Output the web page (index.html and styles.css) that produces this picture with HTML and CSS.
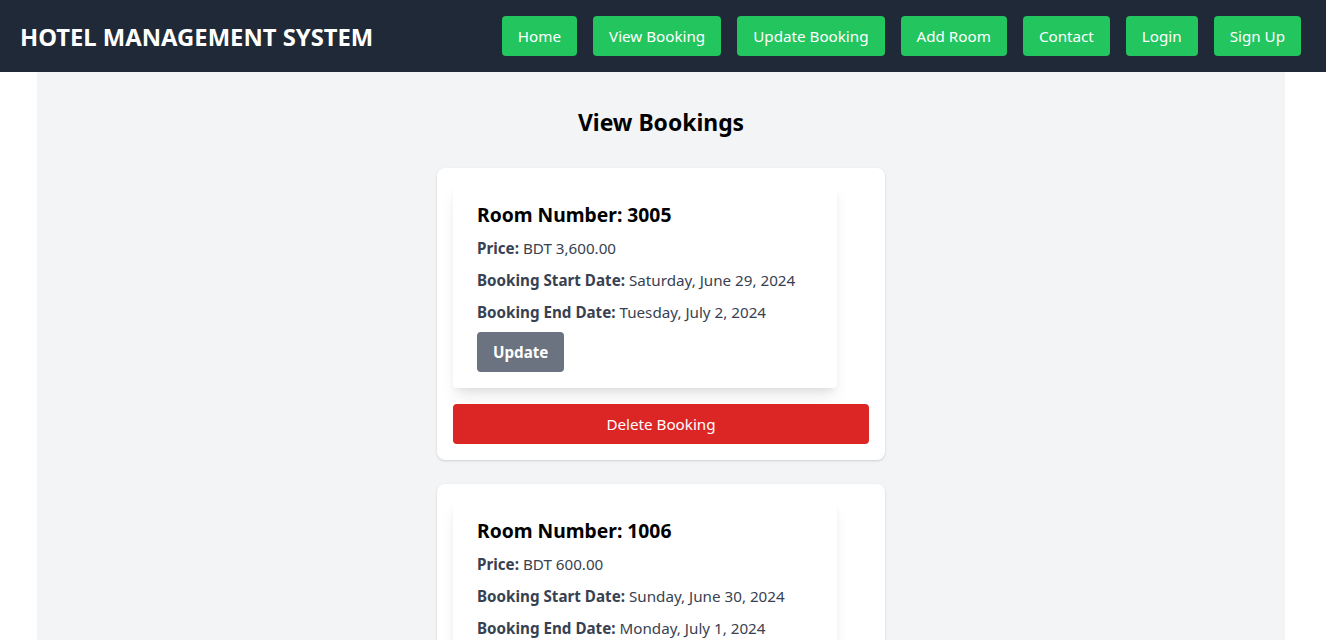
FILE: index.html
```html
<!DOCTYPE html>
<html lang="en">
<head>
<meta charset="utf-8">
<title>Hotel Management System</title>
<link rel="stylesheet" href="styles.css">
</head>
<body>
<header class="navbar">
  <h1 class="brand">HOTEL MANAGEMENT SYSTEM</h1>
  <nav class="nav-links">
    <a class="nav-btn" href="#">Home</a>
    <a class="nav-btn" href="#">View Booking</a>
    <a class="nav-btn" href="#">Update Booking</a>
    <a class="nav-btn" href="#">Add Room</a>
    <a class="nav-btn" href="#">Contact</a>
    <a class="nav-btn" href="#">Login</a>
    <a class="nav-btn" href="#">Sign Up</a>
  </nav>
</header>
<main class="page">
  <h2 class="page-title">View Bookings</h2>
  <div class="booking-list">
    <section class="booking-card">
      <div class="room-card">
        <h3 class="room-title">Room Number: 3005</h3>
        <p class="row"><b>Price:</b> BDT 3,600.00</p>
        <p class="row"><b>Booking Start Date:</b> Saturday, June 29, 2024</p>
        <p class="row"><b>Booking End Date:</b> Tuesday, July 2, 2024</p>
        <button class="btn-update">Update</button>
      </div>
      <button class="btn-delete">Delete Booking</button>
    </section>
    <section class="booking-card">
      <div class="room-card">
        <h3 class="room-title">Room Number: 1006</h3>
        <p class="row"><b>Price:</b> BDT 600.00</p>
        <p class="row"><b>Booking Start Date:</b> Sunday, June 30, 2024</p>
        <p class="row"><b>Booking End Date:</b> Monday, July 1, 2024</p>
        <button class="btn-update">Update</button>
      </div>
      <button class="btn-delete">Delete Booking</button>
    </section>
  </div>
</main>
</body>
</html>
```
FILE: styles.css
```css
* { box-sizing: border-box; }
html, body {
  margin: 0;
  padding: 0;
  background: #ffffff;
  font-family: "Noto Sans", "Open Sans", sans-serif;
  font-size: 15.2px;
  line-height: 24px;
}
.navbar {
  height: 72px;
  background: #1f2937;
  display: flex;
  align-items: center;
  justify-content: space-between;
  padding: 0 25px 0 20px;
}
.brand {
  margin: 0;
  padding-top: 2px;
  color: #ffffff;
  font-size: 23.8px;
  line-height: 32px;
  font-weight: 700;
}
.nav-links {
  display: flex;
  gap: 16px;
}
.nav-btn {
  display: block;
  height: 40px;
  padding: 8px 16px;
  background: #22c55e;
  color: #ffffff;
  text-decoration: none;
  border-radius: 4px;
  font-size: 15.2px;
  line-height: 24px;
}
.page {
  margin: 0 41px 0 37px;
  background: #f3f4f6;
  padding: 35px 0 40px;
  min-height: 600px;
}
.page-title {
  margin: 0 0 29px;
  text-align: center;
  font-size: 22.9px;
  line-height: 32px;
  font-weight: 700;
  color: #000;
}
.booking-list {
  display: flex;
  flex-direction: column;
  align-items: center;
  gap: 24px;
}
.booking-card {
  width: 448px;
  background: #fff;
  border-radius: 8px;
  padding: 16px;
  box-shadow: 0 1px 3px rgba(0,0,0,0.1), 0 1px 2px rgba(0,0,0,0.06);
}
.room-card {
  width: 384px;
  background: #fff;
  border-radius: 4px;
  padding: 16px 24px;
  box-shadow: 0 10px 15px -3px rgba(0,0,0,0.1), 0 4px 6px -2px rgba(0,0,0,0.05);
  margin-bottom: 16px;
}
.room-title {
  margin: 0 0 8px;
  padding-top: 1px;
  font-size: 19.3px;
  line-height: 27px;
  font-weight: 700;
  color: #000;
}
.row {
  margin: 0 0 8px;
  color: #374151;
  font-size: 15.2px;
  line-height: 24px;
}
.row b { font-weight: 700; }
.btn-update {
  display: block;
  height: 40px;
  padding: 8px 16px;
  border: 0;
  border-radius: 4px;
  background: #6b7280;
  color: #fff;
  font-family: inherit;
  font-weight: 700;
  font-size: 15.2px;
  line-height: 24px;
}
.btn-delete {
  display: block;
  width: 100%;
  height: 40px;
  border: 0;
  border-radius: 4px;
  background: #dc2626;
  color: #fff;
  font-family: inherit;
  font-size: 15.2px;
  line-height: 24px;
}
```
